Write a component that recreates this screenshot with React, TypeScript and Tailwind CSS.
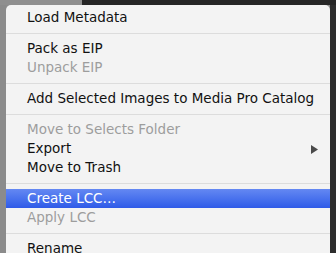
import React from "react";

type Item =
  | { kind: "item"; label: string; disabled?: boolean; active?: boolean; submenu?: boolean }
  | { kind: "sep" };

const items: Item[] = [
  { kind: "item", label: "Load Metadata" },
  { kind: "sep" },
  { kind: "item", label: "Pack as EIP" },
  { kind: "item", label: "Unpack EIP", disabled: true },
  { kind: "sep" },
  { kind: "item", label: "Add Selected Images to Media Pro Catalog" },
  { kind: "sep" },
  { kind: "item", label: "Move to Selects Folder", disabled: true },
  { kind: "item", label: "Export", submenu: true },
  { kind: "item", label: "Move to Trash" },
  { kind: "sep" },
  { kind: "item", label: "Create LCC…", active: true },
  { kind: "item", label: "Apply LCC", disabled: true },
  { kind: "sep" },
  { kind: "item", label: "Rename" },
];

const MenuRow = ({ item }: { item: Item }) => {
  if (item.kind === "sep") {
    return (
      <div className="h-[12px] flex items-center">
        <div className="h-px w-full bg-[#dcdcdc]" />
      </div>
    );
  }
  let cls = "text-[#111111]";
  if (item.disabled) cls = "text-[#9d9d9d]";
  if (item.active) cls = "text-white bg-gradient-to-b from-[#6488f2] to-[#2f5ae8]";
  return (
    <div className={`h-[19px] flex items-center pl-[21px] pr-[12px] ${cls}`}>
      <span className="flex-1 whitespace-nowrap">{item.label}</span>
      {item.submenu && (
        <svg width="7" height="9" viewBox="0 0 7 9" className="mt-[1px]">
          <path d="M0 0 L7 4.5 L0 9 Z" fill="#4a4a4a" />
        </svg>
      )}
    </div>
  );
};

export default function App() {
  return (
    <div className="w-[336px] h-[253px] overflow-hidden flex flex-col bg-[#8d8d8d]">
      <div className="h-[5px] flex shrink-0">
        <div className="w-[82px] bg-[#8f8f8f]" />
        <div className="flex-1 bg-[#262626]" />
      </div>
      <div className="flex flex-1 min-h-0">
        <div className="w-[6px] bg-[#8b8b8b]" />
        <div
          className="w-[324px] bg-[#f3f3f3] rounded-t-[5px] pt-[3px] text-[13.5px] leading-none"
          style={{ fontFamily: '"DejaVu Sans", "Noto Sans", sans-serif' }}
        >
          {items.map((item, i) => (
            <MenuRow key={i} item={item} />
          ))}
        </div>
        <div className="w-[6px] bg-[#2e2e2e]" />
      </div>
    </div>
  );
}
